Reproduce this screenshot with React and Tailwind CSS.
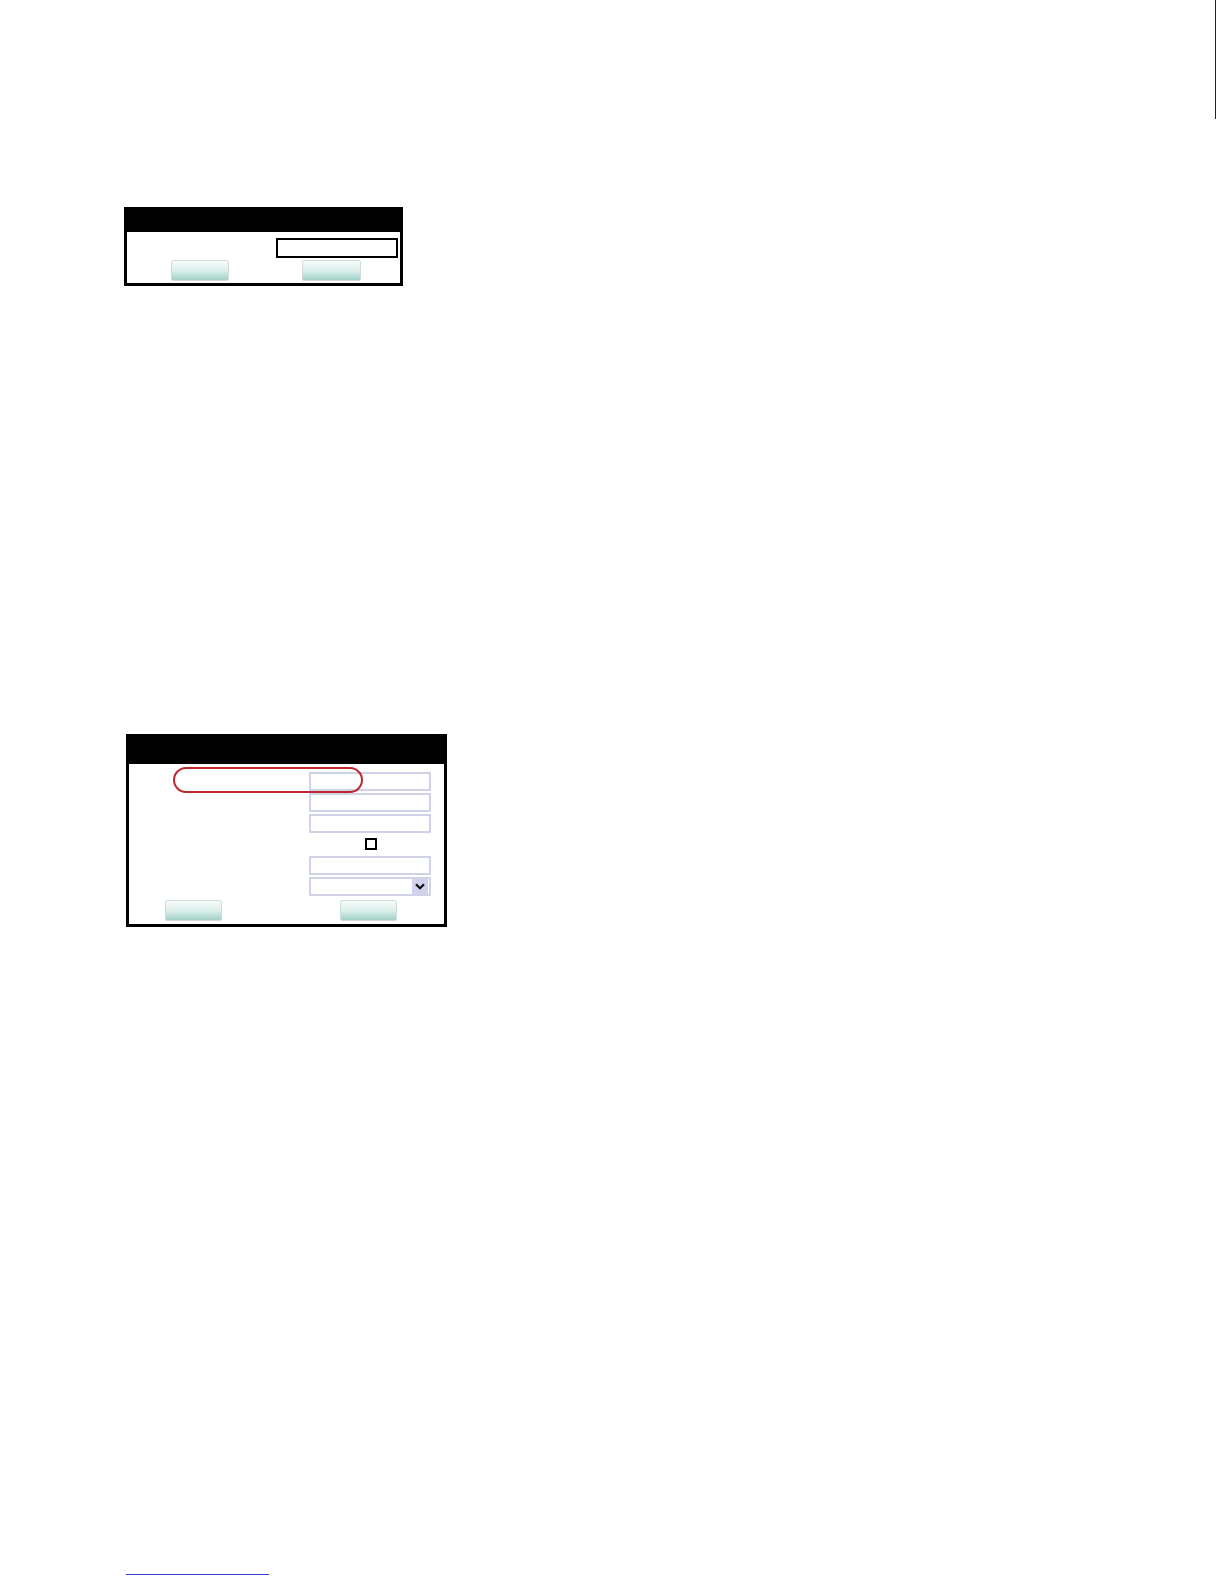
import React from 'react'

// Little teal-gradient button used in both dialogs
const GlassButton = ({ className = '' }) => (
  <div
    className={`h-[21px] rounded-[2px] border border-[#cfdcd9] bg-gradient-to-b from-[#f7fbfa] via-[#dcefeb] to-[#a2d1c8] ${className}`}
  ></div>
)

const Field = ({ className = '' }) => (
  <div className={`h-[19px] w-[122px] border-2 border-[#d0d2e6] bg-white ${className}`}></div>
)

export default function App() {
  return (
    <div className="relative min-h-[1584px] w-[1224px] bg-white font-['Liberation_Sans',sans-serif]">
      {/* thin rule at the top right edge */}
      <div className="absolute left-[1215px] top-0 h-[119px] w-px bg-[#222]"></div>

      <div className="flex flex-col pt-[207px]">
        {/* Dialog 1 */}
        <div className="ml-[124px] w-[279px] border-x-[3px] border-b-[3px] border-black">
          <div className="h-[25px] bg-black"></div>
          <div className="flex flex-col pt-[6px] pb-[2px]">
            <div className="ml-[149px] h-[20px] w-[122px] border-2 border-black bg-white"></div>
            <div className="mt-[2px] flex pl-[44px]">
              <GlassButton className="w-[58px]" />
              <GlassButton className="ml-[73px] w-[59px]" />
            </div>
          </div>
        </div>

        {/* Dialog 2 */}
        <div className="ml-[126px] mt-[448px] w-[321px] border-x-[3px] border-b-[3px] border-black">
          <div className="h-[30px] bg-black"></div>
          <div className="relative flex flex-col pt-[8px] pb-[3px]">
            {/* red annotation oval */}
            <div className="absolute left-[44px] top-[3px] h-[26px] w-[190px] rounded-full border-2 border-[#c0262c]"></div>

            <div className="ml-[180px] flex flex-col gap-[2px]">
              <Field />
              <Field />
              <Field />
            </div>
            <div className="ml-[236px] mt-[5px] h-[12px] w-[12px] border-2 border-black bg-white"></div>
            <div className="ml-[180px] mt-[6px] flex flex-col gap-[2px]">
              <Field />
              <div className="flex h-[19px] w-[122px] items-center justify-end border-2 border-[#d0d2e6] bg-white pr-[1px]">
                <div className="flex h-[15px] w-[16px] items-center justify-center bg-[#d2d2ee]">
                  <svg width="10" height="7" viewBox="0 0 10 7">
                    <path d="M1 1.2 L5 5.2 L9 1.2" fill="none" stroke="#111" strokeWidth="2.2" />
                  </svg>
                </div>
              </div>
            </div>
            <div className="mt-[4px] flex pl-[36px]">
              <GlassButton className="w-[57px]" />
              <GlassButton className="ml-[118px] w-[57px]" />
            </div>
          </div>
        </div>

        {/* footnote rule */}
        <div className="ml-[126px] mt-[647px] h-px w-[143px] bg-[#3a3acc]"></div>
      </div>
    </div>
  )
}
